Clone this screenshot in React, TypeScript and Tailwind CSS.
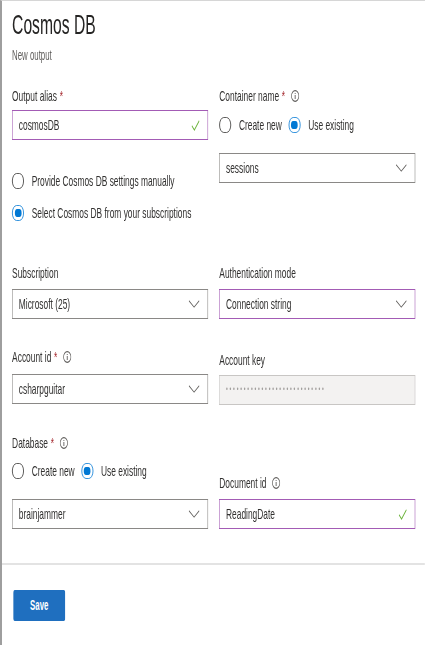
import React from "react";

// The reference is a horizontally squeezed capture, so the form is laid out
// at its natural width and narrowed with a single scale-x on the wrapper.
const font = { fontFamily: '"Liberation Sans", Arial, sans-serif' };

function Chevron() {
  return (
    <svg width="20" height="8" viewBox="0 0 20 8" className="shrink-0">
      <path d="M0.8 0.8 L10 7.2 L19.2 0.8" fill="none" stroke="#605e5c" strokeWidth="1.1" />
    </svg>
  );
}

function Check() {
  return (
    <svg width="15" height="11" viewBox="0 0 15 11" className="shrink-0">
      <path d="M1 5.8 L5.5 10 L14.2 0.8" fill="none" stroke="#6bb33a" strokeWidth="1.3" />
    </svg>
  );
}

function Info() {
  return (
    <svg width="15" height="12" viewBox="0 0 15 12" className="shrink-0">
      <ellipse cx="7.5" cy="6" rx="6.6" ry="5.4" fill="none" stroke="#605e5c" strokeWidth="1.2" />
      <ellipse cx="7.5" cy="3.5" rx="1" ry="0.6" fill="#605e5c" />
      <path d="M7.5 5.1 V8.9" stroke="#605e5c" strokeWidth="1.6" />
    </svg>
  );
}

function Label({ text, required, info }: { text: string; required?: boolean; info?: boolean }) {
  return (
    <div className="flex h-4 items-center text-[15px] leading-4 text-[#323130]">
      <span>{text}</span>
      {required && <span className="ml-[5px] text-[#a4262c]">*</span>}
      {info && (
        <span className="ml-[10px] flex items-center">
          <Info />
        </span>
      )}
    </div>
  );
}

function Radio({ checked, label }: { checked?: boolean; label: string }) {
  return (
    <div className="flex h-[18px] items-center gap-[14px] text-[15px] text-[#323130]">
      <span
        className={
          checked
            ? "flex h-[16px] w-[21px] shrink-0 items-center justify-center rounded-full border border-x-[1.8px] border-[#0078d4]"
            : "flex h-[16px] w-[21px] shrink-0 items-center justify-center rounded-full border border-x-[1.8px] border-[#323130]"
        }
      >
        {checked && <span className="h-[8px] w-[12px] rounded-full bg-[#0078d4]" />}
      </span>
      <span>{label}</span>
    </div>
  );
}

function Field({
  value,
  kind,
  purple,
  disabled,
}: {
  value: string;
  kind: "select" | "text";
  purple?: boolean;
  disabled?: boolean;
}) {
  const border = purple
    ? "border-[#a35bb5]"
    : disabled
    ? "border-[#c8c6c4] bg-[#f3f2f1]"
    : "border-[#8a8886]";
  return (
    <div
      className={`flex h-[30px] items-center justify-between border border-x-[1.8px] pl-[11px] pr-[14px] text-[15px] ${border} ${
        disabled ? "text-[#a19f9d]" : "text-[#323130]"
      }`}
    >
      <span className={disabled ? "text-[9px] tracking-[3.2px]" : ""}>{value}</span>
      {kind === "select" ? <Chevron /> : purple ? <Check /> : null}
    </div>
  );
}

export default function App() {
  return (
    <div
      style={font}
      className="h-[645px] w-[425px] overflow-hidden border-l-2 border-t border-l-[#9e9e9e] border-t-[#d6d6d6] bg-white"
    >
      <div className="w-[755px] origin-top-left scale-x-[0.56]">
        <div className="pl-[18px] pt-[8px]">
          <h1 className="text-[28px] leading-8 text-[#252423]">Cosmos DB</h1>
          <div className="mt-[7px] text-[14px] leading-[14px] text-[#605e5c]">New output</div>
        </div>

        <div className="mt-[26px] flex gap-[20px] pl-[18px]">
          <div className="flex w-[350px] flex-col">
            <Label text="Output alias" required />
            <div className="mt-[6px]">
              <Field value="cosmosDB" kind="text" purple />
            </div>
            <div className="mt-[32px]">
              <Radio label="Provide Cosmos DB settings manually" />
            </div>
            <div className="mt-[14px]">
              <Radio checked label="Select Cosmos DB from your subscriptions" />
            </div>
            <div className="mt-[43px]">
              <Label text="Subscription" />
            </div>
            <div className="mt-[8px]">
              <Field value="Microsoft (25)" kind="select" />
            </div>
            <div className="mt-[30px]">
              <Label text="Account id" required info />
            </div>
            <div className="mt-[9px]">
              <Field value="csharpguitar" kind="select" />
            </div>
            <div className="mt-[31px]">
              <Label text="Database" required info />
            </div>
            <div className="mt-[11px] flex gap-[12px]">
              <Radio label="Create new" />
              <Radio checked label="Use existing" />
            </div>
            <div className="mt-[19px]">
              <Field value="brainjammer" kind="select" />
            </div>
          </div>

          <div className="flex w-[350px] flex-col">
            <Label text="Container name" required info />
            <div className="mt-[12px] flex gap-[12px]">
              <Radio label="Create new" />
              <Radio checked label="Use existing" />
            </div>
            <div className="mt-[19px]">
              <Field value="sessions" kind="select" />
            </div>
            <div className="mt-[82px]">
              <Label text="Authentication mode" />
            </div>
            <div className="mt-[8px]">
              <Field value="Connection string" kind="select" purple />
            </div>
            <div className="mt-[33px]">
              <Label text="Account key" />
            </div>
            <div className="mt-[7px]">
              <Field value="••••••••••••••••••••••••••••" kind="text" disabled />
            </div>
            <div className="mt-[70px]">
              <Label text="Document id" info />
            </div>
            <div className="mt-[8px]">
              <Field value="ReadingDate" kind="text" purple />
            </div>
          </div>
        </div>

        <div className="mt-[34px] h-[2px] bg-[#e3e3e3]" />

        <div className="pl-[20px] pt-[25px]">
          <button className="h-[31px] w-[93px] rounded-[3px] bg-[#1f6fbf] text-[14px] font-bold text-white">
            Save
          </button>
        </div>
      </div>
    </div>
  );
}
